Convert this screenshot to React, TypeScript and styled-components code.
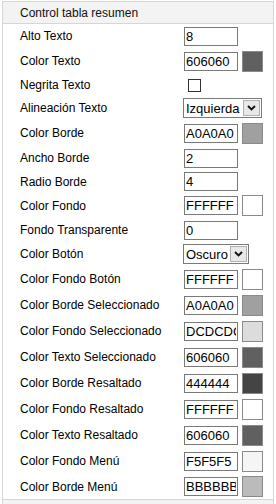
import * as React from "react";
import styled, { createGlobalStyle } from "styled-components";

type TField =
  | { kind: "text"; label: string; value: string; h: number }
  | { kind: "color"; label: string; value: string; h: number }
  | { kind: "check"; label: string; h: number }
  | { kind: "select"; label: string; value: string; width: number; h: number };

const fields: TField[] = [
  { kind: "text", label: "Alto Texto", value: "8", h: 24 },
  { kind: "color", label: "Color Texto", value: "606060", h: 26 },
  { kind: "check", label: "Negrita Texto", h: 22 },
  { kind: "select", label: "Alineación Texto", value: "Izquierda", width: 79, h: 24 },
  { kind: "color", label: "Color Borde", value: "A0A0A0", h: 26 },
  { kind: "text", label: "Ancho Borde", value: "2", h: 24 },
  { kind: "text", label: "Radio Borde", value: "4", h: 23 },
  { kind: "color", label: "Color Fondo", value: "FFFFFF", h: 25 },
  { kind: "text", label: "Fondo Transparente", value: "0", h: 24 },
  { kind: "select", label: "Color Botón", value: "Oscuro", width: 66, h: 24 },
  { kind: "color", label: "Color Fondo Botón", value: "FFFFFF", h: 26 },
  { kind: "color", label: "Color Borde Seleccionado", value: "A0A0A0", h: 26 },
  { kind: "color", label: "Color Fondo Seleccionado", value: "DCDCDC", h: 26 },
  { kind: "color", label: "Color Texto Seleccionado", value: "606060", h: 26 },
  { kind: "color", label: "Color Borde Resaltado", value: "444444", h: 26 },
  { kind: "color", label: "Color Fondo Resaltado", value: "FFFFFF", h: 26 },
  { kind: "color", label: "Color Texto Resaltado", value: "606060", h: 26 },
  { kind: "color", label: "Color Fondo Menú", value: "F5F5F5", h: 26 },
  { kind: "color", label: "Color Borde Menú", value: "BBBBBB", h: 25 }
];

const selectOptions: Record<string, string[]> = {
  Izquierda: ["Izquierda", "Centro", "Derecha"],
  Oscuro: ["Oscuro", "Claro"]
};

const Chevron = () => (
  <svg width="9" height="6" viewBox="0 0 9 6">
    <polyline points="1,1 4.5,4.5 8,1" fill="none" stroke="#111" strokeWidth="1.9" />
  </svg>
);

export default function App() {
  const renderControl = (field: TField) => {
    switch (field.kind) {
      case "text":
        return <TextInput type="text" defaultValue={field.value} />;
      case "color":
        return (
          <>
            <TextInput type="text" defaultValue={field.value} />
            <Swatch $color={"#" + field.value} />
          </>
        );
      case "check":
        return <CheckBox type="checkbox" />;
      case "select":
        return (
          <SelectBox $width={field.width}>
            <NativeSelect defaultValue={field.value}>
              {selectOptions[field.value].map(o => (
                <option key={o}>{o}</option>
              ))}
            </NativeSelect>
            <ArrowBox>
              <Chevron />
            </ArrowBox>
          </SelectBox>
        );
    }
  };

  return (
    <>
      <GlobalStyle />
      <Page>
        <Panel>
          <PanelHeader>Control tabla resumen</PanelHeader>
          {fields.map(field => (
            <Row key={field.label} $h={field.h}>
              <Label>{field.label}</Label>
              <Controls>{renderControl(field)}</Controls>
            </Row>
          ))}
        </Panel>
        <NextPanel>
          <PanelHeader />
        </NextPanel>
      </Page>
    </>
  );
}

const GlobalStyle = createGlobalStyle`
  html, body {
    margin: 0;
    padding: 0;
    background: #ffffff;
    font-family: "Liberation Sans", Arial, sans-serif;
  }
`;

const Page = styled.div`
  padding: 1px 2px 0;
`;

const Panel = styled.section`
  border: 1px solid #d6d6d6;
  background: #ffffff;
`;

const NextPanel = styled.section`
  border: 1px solid #d6d6d6;
  border-top: none;
`;

const PanelHeader = styled.div`
  height: 21px;
  display: flex;
  align-items: center;
  padding-left: 17px;
  background: #f3f3f3;
  border-bottom: 1px solid #d6d6d6;
  font-size: 12px;
  color: #111111;
`;

const Row = styled.div<{ $h: number }>`
  display: flex;
  align-items: center;
  height: ${p => p.$h}px;
  padding-left: 17px;
`;

const Label = styled.span`
  flex: 0 0 164px;
  font-size: 12px;
  color: #000000;
  white-space: nowrap;
`;

const Controls = styled.div`
  display: flex;
  align-items: center;
  gap: 4px;
`;

const TextInput = styled.input`
  width: 54px;
  height: 19px;
  box-sizing: border-box;
  margin: 0;
  padding: 0 1px;
  border: 1px solid #7a7a7a;
  border-radius: 0;
  background: #ffffff;
  font-family: "Liberation Sans", Arial, sans-serif;
  font-size: 13px;
  color: #000000;
  outline: none;
`;

const Swatch = styled.span<{ $color: string }>`
  width: 21px;
  height: 21px;
  box-sizing: border-box;
  border: 1px solid #8a8a8a;
  background: ${p => p.$color};
`;

const CheckBox = styled.input`
  appearance: none;
  width: 13px;
  height: 13px;
  box-sizing: border-box;
  margin: 0 0 0 4px;
  border: 1px solid #333333;
  background: #ffffff;
`;

const SelectBox = styled.div<{ $width: number }>`
  display: flex;
  width: ${p => p.$width}px;
  height: 20px;
  box-sizing: border-box;
  margin-left: -1px;
  border: 1px solid #7a7a7a;
  background: #ffffff;
`;

const NativeSelect = styled.select`
  appearance: none;
  flex: 1;
  min-width: 0;
  margin: 0;
  padding: 0 0 0 2px;
  border: none;
  background: transparent;
  font-family: "Liberation Sans", Arial, sans-serif;
  font-size: 13px;
  color: #000000;
  outline: none;
`;

const ArrowBox = styled.span`
  flex: 0 0 15px;
  display: flex;
  align-items: center;
  justify-content: center;
  margin: 1px;
  background: #e8e8e8;
  border: 1px solid #b0b0b0;
`;
